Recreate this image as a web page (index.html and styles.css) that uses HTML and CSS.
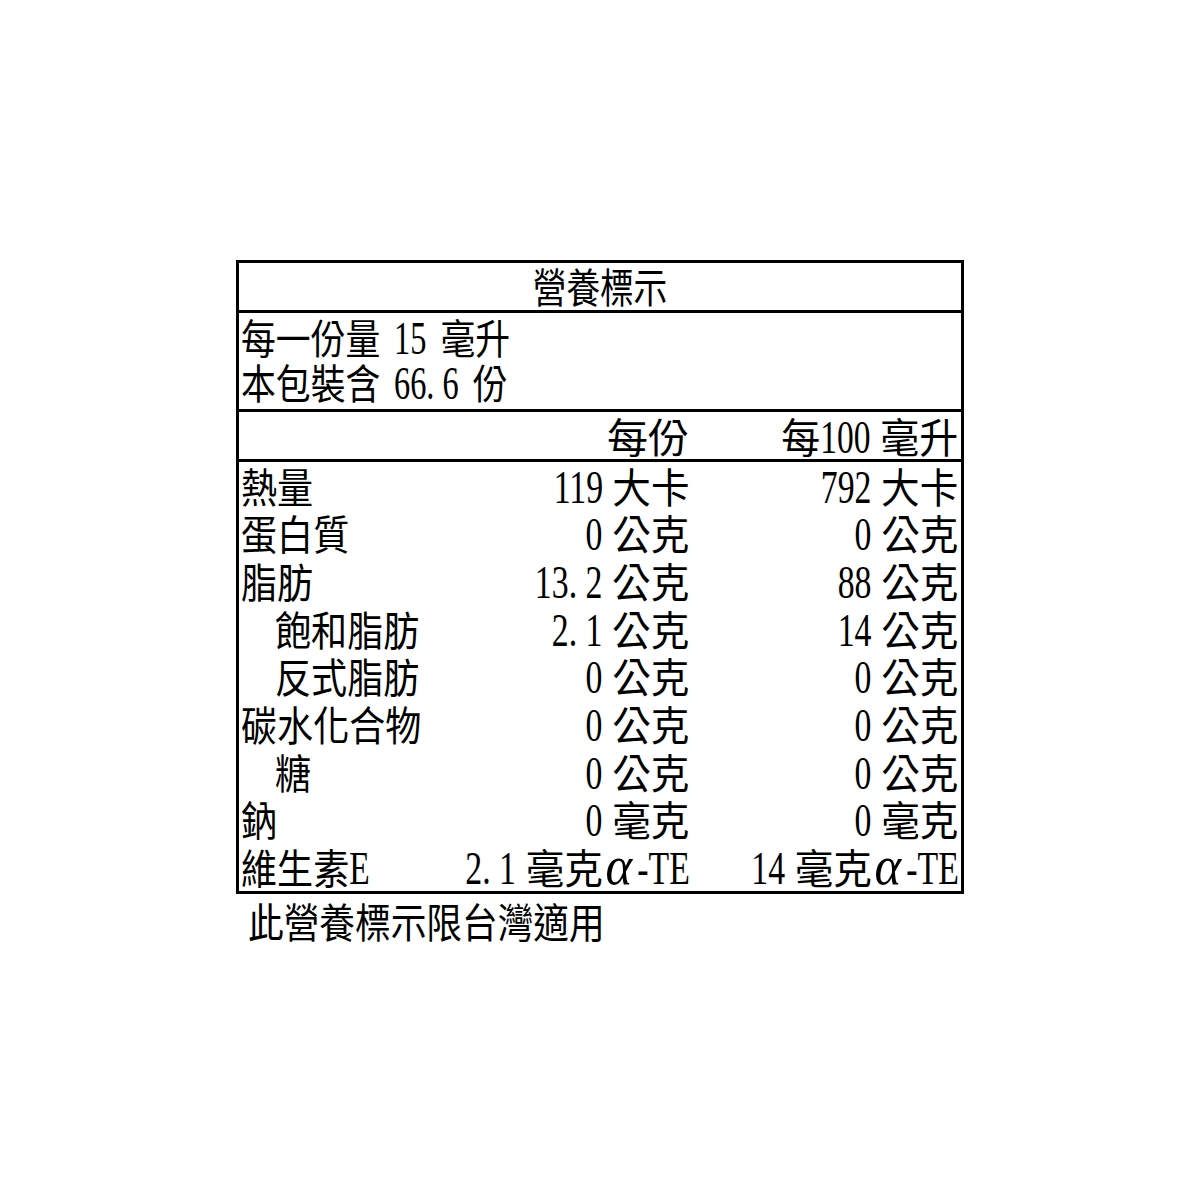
FILE: index.html
```html
<!DOCTYPE html>
<html lang="zh-Hant">
<head>
<meta charset="utf-8">
<title>營養標示</title>
<link rel="stylesheet" href="styles.css">
</head>
<body>
<div class="page">
  <div class="label">
    <div class="title"><span class="t">營養標示</span></div>
    <div class="serving">
      <div class="sline"><span class="t">每一份量 <span class="d" style="--w:1">15</span> 毫升</span></div>
      <div class="sline"><span class="t">本包裝含 <span class="d" style="--w:2">66<span class="p">.</span>6</span> 份</span></div>
    </div>
    <div class="row head">
      <div class="c k"></div>
      <div class="c v per"><span class="t">每份</span></div>
      <div class="c v"><span class="t">每<span class="d" style="--w:1.5">100</span> 毫升</span></div>
    </div>
    <div class="body">
      <div class="row">
        <div class="c k"><span class="t">熱量</span></div>
        <div class="c v"><span class="t"><span class="d" style="--w:1.5">119</span> 大卡</span></div>
        <div class="c v"><span class="t"><span class="d" style="--w:1.5">792</span> 大卡</span></div>
      </div>
      <div class="row">
        <div class="c k"><span class="t">蛋白質</span></div>
        <div class="c v"><span class="t"><span class="d" style="--w:.5">0</span> 公克</span></div>
        <div class="c v"><span class="t"><span class="d" style="--w:.5">0</span> 公克</span></div>
      </div>
      <div class="row">
        <div class="c k"><span class="t">脂肪</span></div>
        <div class="c v"><span class="t"><span class="d" style="--w:2">13<span class="p">.</span>2</span> 公克</span></div>
        <div class="c v"><span class="t"><span class="d" style="--w:1">88</span> 公克</span></div>
      </div>
      <div class="row">
        <div class="c k sub"><span class="t">飽和脂肪</span></div>
        <div class="c v"><span class="t"><span class="d" style="--w:1.5">2<span class="p">.</span>1</span> 公克</span></div>
        <div class="c v"><span class="t"><span class="d" style="--w:1">14</span> 公克</span></div>
      </div>
      <div class="row">
        <div class="c k sub"><span class="t">反式脂肪</span></div>
        <div class="c v"><span class="t"><span class="d" style="--w:.5">0</span> 公克</span></div>
        <div class="c v"><span class="t"><span class="d" style="--w:.5">0</span> 公克</span></div>
      </div>
      <div class="row">
        <div class="c k"><span class="t">碳水化合物</span></div>
        <div class="c v"><span class="t"><span class="d" style="--w:.5">0</span> 公克</span></div>
        <div class="c v"><span class="t"><span class="d" style="--w:.5">0</span> 公克</span></div>
      </div>
      <div class="row">
        <div class="c k sub"><span class="t">糖</span></div>
        <div class="c v"><span class="t"><span class="d" style="--w:.5">0</span> 公克</span></div>
        <div class="c v"><span class="t"><span class="d" style="--w:.5">0</span> 公克</span></div>
      </div>
      <div class="row">
        <div class="c k"><span class="t">鈉</span></div>
        <div class="c v"><span class="t"><span class="d" style="--w:.5">0</span> 毫克</span></div>
        <div class="c v"><span class="t"><span class="d" style="--w:.5">0</span> 毫克</span></div>
      </div>
      <div class="row">
        <div class="c k"><span class="t">維生素<span class="d" style="--w:.611">E</span></span></div>
        <div class="c v"><span class="t"><span class="d" style="--w:1.5">2<span class="p">.</span>1</span> 毫克<span class="a">α</span><span class="d dash" style="--w:1.555">-TE</span></span></div>
        <div class="c v"><span class="t"><span class="d" style="--w:1">14</span> 毫克<span class="a">α</span><span class="d dash" style="--w:1.555">-TE</span></span></div>
      </div>
    </div>
  </div>
  <div class="note"><span class="t">此營養標示限台灣適用</span></div>
</div>
</body>
</html>
```

FILE: styles.css
```css
* {
  box-sizing: border-box;
}

html,
body {
  margin: 0;
  background: #fff;
}

body {
  font-family: "Liberation Serif", "Noto Sans CJK TC", serif;
  color: #000;
}

.page {
  padding: 260px 0 0 236px;
}

.label {
  width: 728px;
  height: 634px;
  border: 3px solid #000;
  display: flex;
  flex-direction: column;
}

.title {
  height: 50px;
  border-bottom: 3px solid #000;
  display: flex;
  justify-content: center;
  padding-top: 5.5px;
}

.serving {
  height: 99px;
  border-bottom: 3px solid #000;
  padding-top: 7px;
}

.sline {
  height: 45px;
  padding-left: 2px;
  display: flex;
}

.row {
  display: grid;
  grid-template-columns: 211px 239px 1fr;
}

.head {
  height: 50px;
  border-bottom: 3px solid #000;
}

.body {
  flex: 1;
  display: grid;
  grid-template-rows: repeat(9, 1fr);
}

.c {
  display: flex;
  padding-top: 6.5px;
  white-space: nowrap;
  min-width: 0;
}

.k {
  padding-left: 2px;
  justify-content: flex-start;
}

.k.sub {
  padding-left: 36px;
}

.v {
  justify-content: flex-end;
}

.v:last-child {
  padding-right: 3px;
}

.t {
  display: inline-block;
  flex-shrink: 0;
  font-size: 41px;
  line-height: 40px;
  height: 40px;
  white-space: nowrap;
  transform: scaleX(0.88);
  transform-origin: left top;
}

.v .t {
  transform: scaleX(0.94);
  transform-origin: right top;
}

.head .v .t {
  transform: scaleX(0.95);
}

.head .per .t {
  transform: scaleX(1);
}

.title .t {
  transform: scaleX(0.82);
  transform-origin: center top;
}

.sline .t {
  transform: scaleX(0.85);
  word-spacing: 6px;
}

.d {
  --s: 0.81;
  display: inline-block;
  font-size: 47px;
  line-height: 34px;
  transform: scaleX(var(--s));
  transform-origin: left center;
  margin-right: calc(var(--w) * (var(--s) - 1) * 1em);
}

.v .d {
  --s: 0.765;
}

.head .v .d {
  --s: 0.75;
}

.d.dash {
  margin-left: 3px;
}

.p {
  margin-right: 0.25em;
}

.a {
  font-style: italic;
  font-size: 54px;
  line-height: 28px;
  margin: 0 2px 0 3px;
}

.note {
  padding: 9.5px 0 0 12px;
}

.note .t {
  transform: scaleX(0.87);
}
```
